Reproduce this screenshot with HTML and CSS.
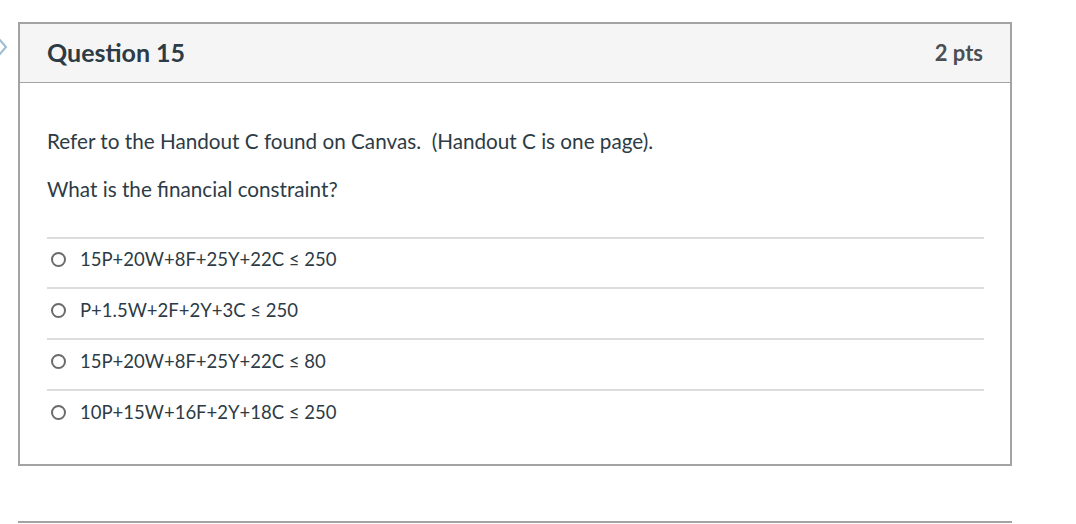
FILE: index.html
```html
<!DOCTYPE html>
<html>
<head>
<meta charset="utf-8">
<link rel="stylesheet" href="styles.css">
</head>
<body>
<div class="page">
  <div class="row">
    <div class="gutter">
      <svg class="chev" width="12" height="20" viewBox="0 0 12 20"><polyline points="0,2 7,10 0,18" fill="none" stroke="#9fbcd3" stroke-width="2"/></svg>
    </div>
    <div class="question">
      <div class="q-header">
        <div class="q-title">Question 15</div>
        <div class="q-pts">2 pts</div>
      </div>
      <div class="q-body">
        <p class="q-text">Refer to the Handout C found on Canvas.&nbsp; (Handout C is one page).</p>
        <p class="q-text">What is the financial constraint?</p>
        <div class="answers">
          <div class="answer"><span class="radio"></span><span class="label">15P+20W+8F+25Y+22C ≤ 250</span></div>
          <div class="answer"><span class="radio"></span><span class="label">P+1.5W+2F+2Y+3C ≤ 250</span></div>
          <div class="answer"><span class="radio"></span><span class="label">15P+20W+8F+25Y+22C ≤ 80</span></div>
          <div class="answer"><span class="radio"></span><span class="label">10P+15W+16F+2Y+18C ≤ 250</span></div>
        </div>
      </div>
    </div>
  </div>
  <div class="row">
    <div class="gutter"></div>
    <div class="divider"></div>
  </div>
</div>
</body>
</html>
```
FILE: styles.css
```css
html, body {
  margin: 0;
  padding: 0;
  background: #fff;
}
body {
  font-family: Lato, "Open Sans", sans-serif;
  color: #2d3b45;
}
.page {
  padding-top: 22px;
}
.row {
  display: flex;
}
.gutter {
  width: 18px;
  flex: none;
}
.chev {
  display: block;
  margin-top: 15px;
  margin-left: -1px;
}
.question {
  width: 994px;
  box-sizing: border-box;
  border: 2px solid #a3a3a3;
}
.q-header {
  display: flex;
  justify-content: space-between;
  align-items: center;
  height: 58px;
  padding: 0 27px;
  background: #f5f5f5;
  border-bottom: 1px solid #a3a3a3;
}
.q-title {
  font-size: 25px;
  font-weight: 700;
  color: #2d3b45;
  margin-top: -2px;
}
.q-pts {
  font-size: 22px;
  font-weight: 700;
  color: #4b4f54;
  margin-top: -2px;
}
.q-body {
  padding: 45px 26px 24px 27px;
}
.q-text {
  margin: 0 0 21px;
  font-size: 20.7px;
  line-height: 27px;
}
.answers {
  margin-top: 34px;
}
.answer {
  display: flex;
  align-items: center;
  border-top: 2px solid #dcdcdc;
  padding: 8px 0 16px 4px;
}
.answer:nth-child(n+2) {
  padding-top: 9px;
}
.radio {
  width: 11px;
  height: 11px;
  border: 2px solid #6b6b6b;
  border-radius: 50%;
  flex: none;
  margin-right: 14px;
}
.label {
  font-size: 18.5px;
  line-height: 24px;
  color: #2d3b45;
}
.divider {
  width: 994px;
  height: 2px;
  background: #a3a3a3;
  margin-top: 55px;
}
```
